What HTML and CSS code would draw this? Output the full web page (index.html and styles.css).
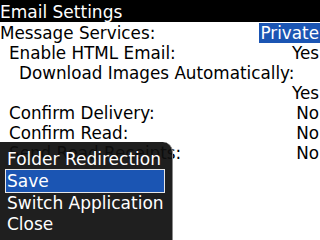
FILE: index.html
```html
<!DOCTYPE html>
<html>
<head>
<meta charset="utf-8">
<link rel="stylesheet" href="styles.css">
</head>
<body>
<div class="screen">
  <div class="titlebar">Email Settings</div>
  <div class="list">
    <div class="row"><span class="label">Message Services:</span><span class="value selected">Private</span></div>
    <div class="row indent1"><span class="label">Enable HTML Email:</span><span class="value">Yes</span></div>
    <div class="row indent2"><span class="label">Download Images Automatically:</span></div>
    <div class="row"><span class="label"></span><span class="value">Yes</span></div>
    <div class="row indent1"><span class="label">Confirm Delivery:</span><span class="value">No</span></div>
    <div class="row indent1"><span class="label">Confirm Read:</span><span class="value">No</span></div>
    <div class="row indent1"><span class="label">Send Read Receipts:</span><span class="value">No</span></div>
  </div>
  <div class="menu">
    <div class="item item-first">Folder Redirection</div>
    <div class="item item-active">Save</div>
    <div class="item item-switch">Switch Application</div>
    <div class="item">Close</div>
  </div>
</div>
</body>
</html>
```

FILE: styles.css
```css
html, body {
  margin: 0;
  padding: 0;
  background: #ffffff;
}
.screen {
  position: relative;
  width: 320px;
  height: 240px;
  overflow: hidden;
  background: #ffffff;
  font-family: "DejaVu Sans", sans-serif;
  color: #000000;
}
.titlebar {
  height: 22px;
  box-sizing: border-box;
  padding: 1px 0 0 0;
  background: #000000;
  color: #ffffff;
  font-size: 17px;
  line-height: 22px;
  white-space: nowrap;
}
.list {
  padding-top: 1px;
  font-size: 16.8px;
}
.row {
  display: flex;
  justify-content: space-between;
  height: 20px;
  line-height: 20px;
  white-space: nowrap;
  padding-right: 1px;
}
.indent1 { padding-left: 9px; }
.indent2 { padding-left: 19px; }
.value.selected {
  background: #1b55b3;
  color: #ffffff;
  padding: 0 1px;
  margin-right: -1px;
}
.menu {
  position: absolute;
  left: 0;
  top: 142px;
  width: 173px;
  height: 110px;
  box-sizing: border-box;
  padding: 7px 0 0 5px;
  background: rgba(14, 14, 14, 0.93);
  border-right: 1px solid #8a8a8a;
  border-top-right-radius: 10px;
  color: #ffffff;
  font-size: 17px;
  white-space: nowrap;
}
.item {
  width: 160px;
  box-sizing: border-box;
  padding-left: 2px;
  line-height: 20px;
}
.item-active {
  background: #1b55b3;
  border: 1px solid #e6e6e6;
  padding-left: 1px;
  line-height: 22px;
}
.item-switch {
  line-height: 21px;
}
```
